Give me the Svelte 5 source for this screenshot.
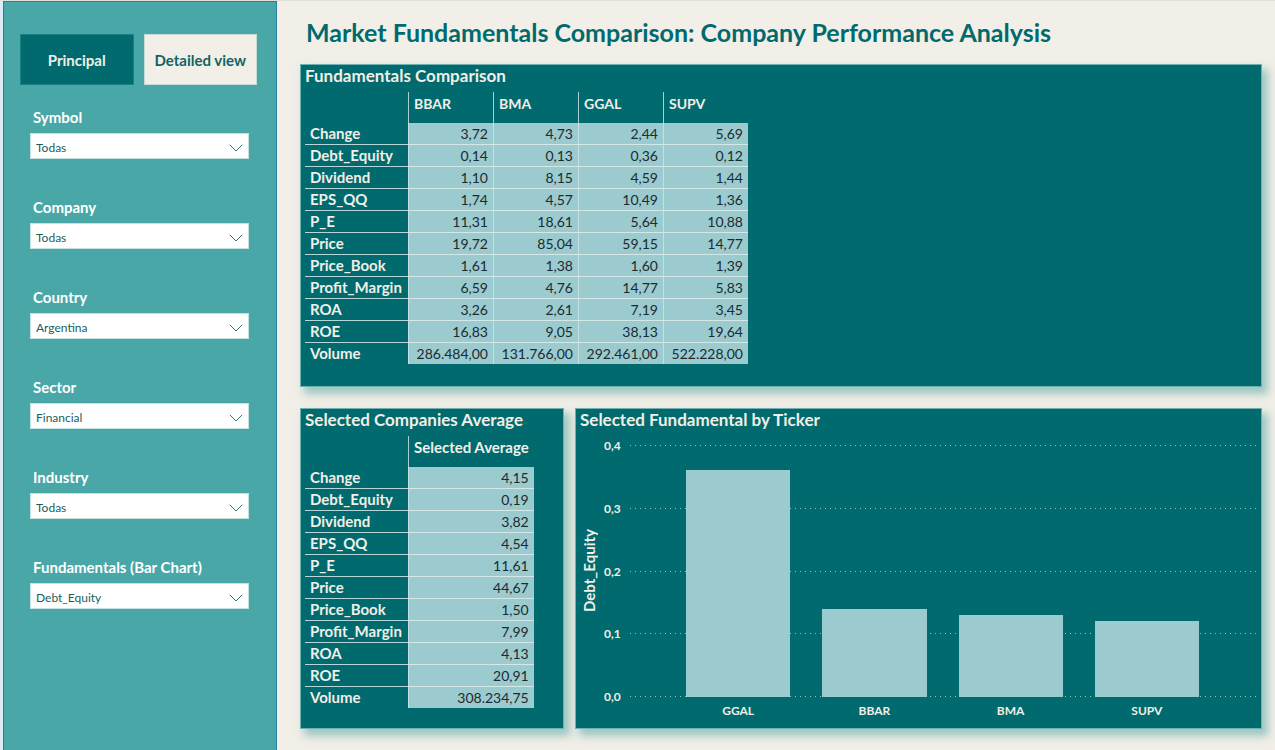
<script>
  const tickers = ['BBAR', 'BMA', 'GGAL', 'SUPV'];

  const rows = [
    { name: 'Change', values: ['3,72', '4,73', '2,44', '5,69'], average: '4,15' },
    { name: 'Debt_Equity', values: ['0,14', '0,13', '0,36', '0,12'], average: '0,19' },
    { name: 'Dividend', values: ['1,10', '8,15', '4,59', '1,44'], average: '3,82' },
    { name: 'EPS_QQ', values: ['1,74', '4,57', '10,49', '1,36'], average: '4,54' },
    { name: 'P_E', values: ['11,31', '18,61', '5,64', '10,88'], average: '11,61' },
    { name: 'Price', values: ['19,72', '85,04', '59,15', '14,77'], average: '44,67' },
    { name: 'Price_Book', values: ['1,61', '1,38', '1,60', '1,39'], average: '1,50' },
    { name: 'Profit_Margin', values: ['6,59', '4,76', '14,77', '5,83'], average: '7,99' },
    { name: 'ROA', values: ['3,26', '2,61', '7,19', '3,45'], average: '4,13' },
    { name: 'ROE', values: ['16,83', '9,05', '38,13', '19,64'], average: '20,91' },
    { name: 'Volume', values: ['286.484,00', '131.766,00', '292.461,00', '522.228,00'], average: '308.234,75' }
  ];

  const filters = [
    { id: 'symbol', label: 'Symbol', value: 'Todas' },
    { id: 'company', label: 'Company', value: 'Todas' },
    { id: 'country', label: 'Country', value: 'Argentina' },
    { id: 'sector', label: 'Sector', value: 'Financial' },
    { id: 'industry', label: 'Industry', value: 'Todas' },
    { id: 'fundamental', label: 'Fundamentals (Bar Chart)', value: 'Debt_Equity' }
  ];

  const ticks = ['0,4', '0,3', '0,2', '0,1', '0,0'];
  const axisMax = 0.4;
  const bars = [
    { name: 'GGAL', value: 0.36 },
    { name: 'BBAR', value: 0.14 },
    { name: 'BMA', value: 0.13 },
    { name: 'SUPV', value: 0.12 }
  ];
</script>

<div class="page">
  <aside class="sidebar">
    <nav class="tabs">
      <button class="tab active" type="button">Principal</button>
      <button class="tab" type="button">Detailed view</button>
    </nav>
    <div class="filters">
      {#each filters as filter}
        <div class="filter">
          <label for={filter.id}>{filter.label}</label>
          <div class="select">
            <select id={filter.id}>
              <option>{filter.value}</option>
            </select>
            <svg viewBox="0 0 14 8" aria-hidden="true">
              <path d="M.8.8 7 7 13.2.8" />
            </svg>
          </div>
        </div>
      {/each}
    </div>
  </aside>

  <main>
    <h1>Market Fundamentals Comparison: Company Performance Analysis</h1>

    <section class="card">
      <h2>Fundamentals Comparison</h2>
      <table>
        <thead>
          <tr>
            <td class="corner"></td>
            {#each tickers as ticker}
              <th class="ticker" scope="col">{ticker}</th>
            {/each}
          </tr>
        </thead>
        <tbody>
          {#each rows as row}
            <tr>
              <th scope="row">{row.name}</th>
              {#each row.values as value}
                <td>{value}</td>
              {/each}
            </tr>
          {/each}
        </tbody>
      </table>
    </section>

    <div class="lower">
      <section class="card average-card">
        <h2>Selected Companies Average</h2>
        <table>
          <thead>
            <tr>
              <td class="corner"></td>
              <th class="average" scope="col">Selected Average</th>
            </tr>
          </thead>
          <tbody>
            {#each rows as row}
              <tr>
                <th scope="row">{row.name}</th>
                <td>{row.average}</td>
              </tr>
            {/each}
          </tbody>
        </table>
      </section>

      <section class="card chart-card">
        <h2>Selected Fundamental by Ticker</h2>
        <div class="chart">
          <div class="axis-title">Debt_Equity</div>
          <div class="ticks">
            {#each ticks as tick}
              <span>{tick}</span>
            {/each}
          </div>
          <div class="plot">
            <div class="gridlines">
              {#each ticks as tick}
                <div class="line"></div>
              {/each}
            </div>
            <div class="bars">
              {#each bars as bar}
                <div class="bar" style:height="{(bar.value / axisMax) * 100}%"></div>
              {/each}
            </div>
          </div>
          <div class="names">
            {#each bars as bar}
              <span>{bar.name}</span>
            {/each}
          </div>
        </div>
      </section>
    </div>
  </main>
</div>

<style>
  :global(body) {
    margin: 0;
    background: #f1efe7;
  }

  .page,
  .page * {
    box-sizing: border-box;
  }

  .page {
    display: flex;
    min-height: 100vh;
    border-top: 1px solid #e2e0da;
    font-family: Lato, "Open Sans", sans-serif;
    font-size: 14px;
    color: #f1efe7;
  }

  .sidebar {
    flex: 0 0 274px;
    margin-left: 3px;
    padding: 32px 19px 0 16px;
    background: #4aa7a7;
    border: 1px solid #2b7f9e;
    border-bottom: 0;
    box-shadow: -3px 0 0 #dcebf5;
  }

  .tabs {
    display: flex;
    gap: 10px;
  }

  .tab {
    flex: 1;
    height: 51px;
    padding: 0;
    border: 1px solid #c3dcd6;
    background: #f1efe7;
    color: #0f6466;
    font: 700 15px/20px Lato, sans-serif;
    white-space: nowrap;
  }

  .tab.active {
    border-color: #1b7f83;
    background: #006a6e;
    color: #f1efe7;
  }

  .filters {
    display: flex;
    flex-direction: column;
    gap: 38px;
    padding: 22px 8px 0 10px;
  }

  .filter label {
    display: block;
    height: 26px;
    padding-left: 3px;
    color: #fff;
    font-size: 15px;
    font-weight: 700;
    line-height: 20px;
  }

  .select {
    display: grid;
    align-items: center;
  }

  .select > * {
    grid-area: 1 / 1;
  }

  select {
    appearance: none;
    width: 100%;
    height: 26px;
    margin: 0;
    padding: 4px 24px 0 5px;
    border: 1px solid #c5e2e2;
    border-radius: 0;
    background: #fff;
    color: #1b5e5e;
    font: 12px/20px Lato, sans-serif;
  }

  .select svg {
    justify-self: end;
    width: 14px;
    height: 8px;
    margin: 4px 6px 0 0;
    fill: none;
    stroke: #3b7478;
    pointer-events: none;
  }

  main {
    flex: 1;
    min-width: 0;
    padding: 16px 13px 20px 23px;
  }

  h1 {
    margin: 0 0 17px 6px;
    color: #006a6e;
    font-size: 25px;
    font-weight: 700;
    line-height: 30px;
  }

  .card {
    padding: 0 4px 22px;
    background: #006a6e;
    border: 1px solid #6fb0b0;
    box-shadow: 5px 6px 8px 1px rgba(74, 160, 158, 0.5);
  }

  h2 {
    margin: 0;
    height: 27px;
    font-size: 17px;
    font-weight: 700;
    line-height: 22px;
    white-space: nowrap;
  }

  .lower {
    display: grid;
    grid-template-columns: 264px minmax(0, 1fr);
    gap: 11px;
    margin-top: 21px;
  }

  .average-card {
    padding-bottom: 20px;
  }

  table {
    border-collapse: separate;
    border-spacing: 0;
  }

  th,
  td {
    padding: 0 5px;
    line-height: 21px;
    white-space: nowrap;
  }

  thead th {
    height: 31px;
    padding-bottom: 8px;
    border-left: 1px solid #a9d0d1;
    text-align: left;
    font-weight: 700;
  }

  .corner {
    width: 103px;
    min-width: 103px;
  }

  .ticker {
    width: 85px;
    min-width: 85px;
  }

  .average {
    width: 125px;
    min-width: 125px;
    font-size: 15px;
  }

  tbody th {
    text-align: left;
    font-size: 15px;
    font-weight: 700;
    border-bottom: 1px solid #b5d7d7;
  }

  tbody td {
    background: #9bcacf;
    border-bottom: 1px solid #d5e8e8;
    border-left: 1px solid #c5e0e2;
    color: #1c2b2f;
    text-align: right;
  }

  tbody tr:last-child > * {
    border-bottom: 0;
  }

  .chart-card {
    display: flex;
    flex-direction: column;
    padding: 0 2px 8px 4px;
  }

  .chart {
    flex: 1;
    display: grid;
    grid-template-columns: 18px 32px minmax(0, 1fr);
    grid-template-rows: minmax(0, 1fr) 23px;
    padding-top: 9px;
  }

  .axis-title {
    writing-mode: vertical-rl;
    transform: rotate(180deg);
    text-align: center;
    font-size: 15px;
    font-weight: 700;
    line-height: 18px;
  }

  .ticks,
  .gridlines {
    display: flex;
    flex-direction: column;
    justify-content: space-between;
  }

  .ticks {
    margin: -8px 0;
    padding-left: 6px;
    font-size: 12px;
    font-weight: 700;
    line-height: 17px;
  }

  .plot {
    display: grid;
  }

  .plot > * {
    grid-area: 1 / 1;
  }

  .line {
    height: 1px;
    background: repeating-linear-gradient(90deg, #8fc3c4 0 1px, transparent 1px 5px);
  }

  .bars,
  .names {
    display: grid;
    grid-template-columns: repeat(4, minmax(0, 1fr));
    padding: 0 44px 0 40px;
  }

  .bars {
    align-items: end;
  }

  .bar {
    margin: 0 16px;
    background: #9bcacf;
  }

  .names {
    grid-column: 3;
    align-items: end;
    text-align: center;
    font-size: 12px;
    font-weight: 700;
    line-height: 18px;
  }
</style>
